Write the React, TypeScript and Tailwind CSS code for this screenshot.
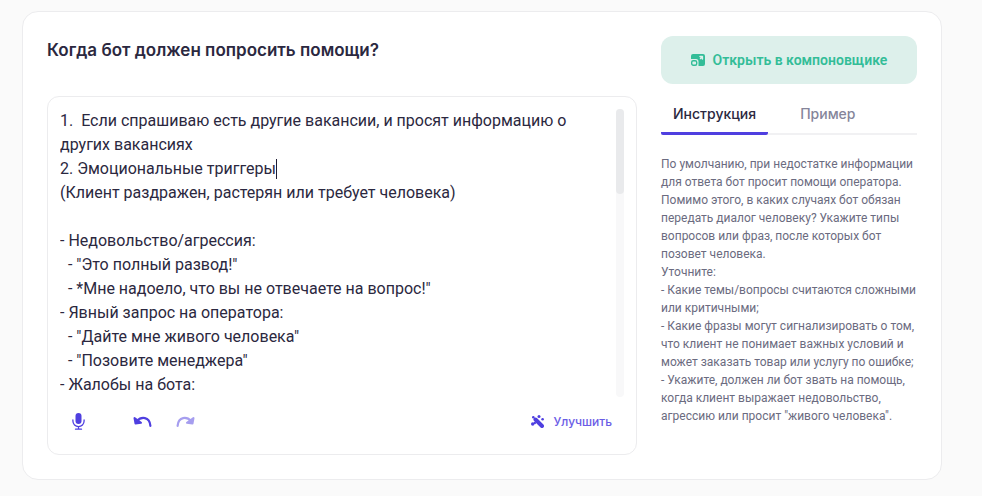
import { useState } from 'react'

const INITIAL_TEXT = `1.  Если спрашиваю есть другие вакансии, и просят информацию о других вакансиях
2. Эмоциональные триггеры
(Клиент раздражен, растерян или требует человека)

- Недовольство/агрессия:
  - "Это полный развод!"
  - *Мне надоело, что вы не отвечаете на вопрос!"
- Явный запрос на оператора:
  - "Дайте мне живого человека"
  - "Позовите менеджера"
- Жалобы на бота:`

const INSTRUCTION = `По умолчанию, при недостатке информации
для ответа бот просит помощи оператора.
Помимо этого, в каких случаях бот обязан
передать диалог человеку? Укажите типы
вопросов или фраз, после которых бот
позовет человека.
Уточните:
- Какие темы/вопросы считаются сложными
или критичными;
- Какие фразы могут сигнализировать о том,
что клиент не понимает важных условий и
может заказать товар или услугу по ошибке;
- Укажите, должен ли бот звать на помощь,
когда клиент выражает недовольство,
агрессию или просит "живого человека".`

function LayoutIcon() {
  return (
    <svg className="h-3 w-3.5" viewBox="0 0 14 12" fill="none">
      <path fill="currentColor" d="M2 0h10a2 2 0 0 1 2 2v8a2 2 0 0 1-2 2H7.500V7.500A2.500 2.500 0 0 0 5 5H0V2a2 2 0 0 1 2-2Z" />
      <path d="M9 2.600h2.400v2.400M11 3 9.500 4.500" stroke="#ddf0eb" strokeWidth="1.500" strokeLinecap="round" strokeLinejoin="round" />
      <rect x=".7" y="6.700" width="5" height="4.600" rx="1.500" stroke="currentColor" strokeWidth="1.400" />
    </svg>
  )
}

function MicIcon() {
  return (
    <svg className="h-[17px] w-[13px]" viewBox="0 0 13 17" fill="none">
      <rect x="3.500" y="0" width="6" height="11" rx="3" fill="currentColor" />
      <path d="M.9 7v1a5.600 5.600 0 0 0 11.200 0V7M6.500 13.600V16M3.500 16.200h6" stroke="currentColor" strokeWidth="1.300" strokeLinecap="round" />
    </svg>
  )
}

function UndoIcon({ className = '' }: { className?: string }) {
  return (
    <svg className={`h-3 w-[19px] ${className}`} viewBox="0 0 19 12" fill="none" stroke="currentColor" strokeLinecap="round" strokeLinejoin="round">
      <path d="M4 5C8 .6 16.500.2 17.400 9.800" strokeWidth="2.200" />
      <path d="M1.500 2 2.500 7.500 8 6.800Z" fill="currentColor" strokeWidth="2" />
    </svg>
  )
}

function WandIcon() {
  return (
    <svg className="h-[13px] w-[13px]" viewBox="0 0 13 13" fill="none">
      <path d="M4.500 4.500 11 11" stroke="currentColor" strokeWidth="4" strokeLinecap="round" />
      <g fill="currentColor">
        <circle cx="2.300" cy="2.300" r="1.300" />
        <circle cx="8" cy="1.500" r="1.500" />
        <circle cx="11.600" cy="4.300" r="1.300" />
        <circle cx="1.700" cy="9" r="1.700" />
        <circle cx="3.800" cy="8" r="1.200" />
      </g>
    </svg>
  )
}

export default function App() {
  const [text, setText] = useState(INITIAL_TEXT)

  return (
    <main className="min-h-screen bg-[#fafafa] pt-[11px] pr-10 pb-4 pl-[22px] font-['Inter',sans-serif] text-[#2b2840]">
      <section className="flex gap-6 rounded-2xl border border-[#ececee] bg-white p-6">
        <div className="min-w-0 flex-1">
          <label htmlFor="help-rules" className="mb-8 block text-[17px] leading-7 font-semibold">
            Когда бот должен попросить помощи?
          </label>
          <div className="rounded-xl border border-[#ececee] p-3">
            <div className="relative flex gap-2">
              <textarea
                id="help-rules"
                value={text}
                onChange={(e) => setText(e.target.value)}
                rows={12}
                spellCheck={false}
                className="block h-[288px] min-w-0 flex-1 resize-none overflow-hidden font-['Roboto',sans-serif] text-base leading-6 outline-none"
              />
              <span className="absolute top-[50px] left-[216px] h-5 w-px bg-[#1f1c33]" />
              <div className="w-2 rounded-full bg-[#f8f8f9]">
                <div className="h-[85px] rounded-full bg-[#e9eaec]" />
              </div>
            </div>
            <div className="flex items-center px-3 pt-4 pb-3 text-[#4f3fe0]">
              <button type="button" aria-label="Голосовой ввод">
                <MicIcon />
              </button>
              <button type="button" aria-label="Отменить" className="ml-12">
                <UndoIcon />
              </button>
              <button type="button" aria-label="Повторить" className="ml-6 opacity-50" disabled>
                <UndoIcon className="-scale-x-100" />
              </button>
              <button type="button" className="ml-auto flex items-center gap-2.5 text-xs leading-4 font-medium">
                <WandIcon />
                <span className="text-[#6a5ce6]">Улучшить</span>
              </button>
            </div>
          </div>
        </div>

        <aside className="w-64 shrink-0">
          <button type="button" className="flex h-12 w-full items-center justify-center gap-2 rounded-xl bg-[#ddf0eb] font-['Roboto',sans-serif] text-sm font-semibold text-[#33bd98]">
            <LayoutIcon />
            Открыть в компоновщике
          </button>
          <div role="tablist" className="mt-4 flex border-b-2 border-[#f1f1f3] text-sm leading-6 font-medium">
            <button type="button" role="tab" aria-selected="true" className="-mb-0.5 rounded-b-xs border-b-3 border-[#4f3fe0] px-3 pt-0.5 pb-1.5">
              Инструкция
            </button>
            <button type="button" role="tab" aria-selected="false" className="-mb-0.5 border-b-3 border-transparent px-8 pt-0.5 pb-1.5 text-[#85859a]">
              Пример
            </button>
          </div>
          <p className="mt-5 font-['Roboto',sans-serif] text-xs leading-[18px] whitespace-pre text-[#6b6b80]">{INSTRUCTION}</p>
        </aside>
      </section>
    </main>
  )
}
